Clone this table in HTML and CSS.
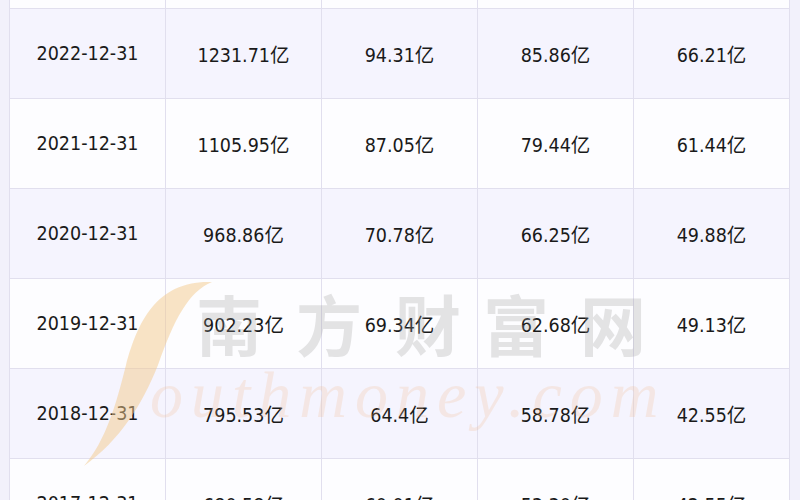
FILE: index.html
```html
<!DOCTYPE html>
<html lang="zh-CN">
<head>
<meta charset="utf-8">
<title>财务数据</title>
<link rel="stylesheet" href="styles.css">
</head>
<body>
<div class="page">
  <table class="data">
    <tbody>
      <tr class="stub odd"><td></td><td></td><td></td><td></td><td></td></tr>
      <tr class="even"><td>2022-12-31</td><td>1231.71亿</td><td>94.31亿</td><td>85.86亿</td><td>66.21亿</td></tr>
      <tr class="odd"><td>2021-12-31</td><td>1105.95亿</td><td>87.05亿</td><td>79.44亿</td><td>61.44亿</td></tr>
      <tr class="even"><td>2020-12-31</td><td>968.86亿</td><td>70.78亿</td><td>66.25亿</td><td>49.88亿</td></tr>
      <tr class="odd"><td>2019-12-31</td><td>902.23亿</td><td>69.34亿</td><td>62.68亿</td><td>49.13亿</td></tr>
      <tr class="even"><td>2018-12-31</td><td>795.53亿</td><td>64.4亿</td><td>58.78亿</td><td>42.55亿</td></tr>
      <tr class="odd"><td>2017-12-31</td><td>680.58亿</td><td>60.01亿</td><td>53.30亿</td><td>42.55亿</td></tr>
    </tbody>
  </table>
  <svg class="watermark" width="800" height="500" viewBox="0 0 800 500" aria-hidden="true">
    <path class="wm-s" d="M212 282 C158 280 138 320 126 365 C116 405 106 440 84 466 C120 440 142 405 158 365 C174 320 188 292 212 282 Z"/>
    <text class="wm-cn" x="196 296 395 483 580" y="351">南方财富网</text>
    <text class="wm-en" x="150" y="417">outhmoney.com</text>
  </svg>
</div>
</body>
</html>
```

FILE: styles.css
```css
html, body {
  margin: 0;
  padding: 0;
  background: #f2f1fb;
}

.page {
  position: relative;
  width: 800px;
  height: 500px;
  overflow: hidden;
  padding: 0 10px 0 9px;
  box-sizing: border-box;
}

.data {
  width: 781px;
  table-layout: fixed;
  border-collapse: collapse;
  font-family: "DejaVu Sans Condensed", "DejaVu Sans", "Noto Sans CJK SC", sans-serif;
  font-size: 19.5px;
  color: #1a1a1a;
}

.data td {
  height: 89px;
  padding: 0;
  text-align: center;
  vertical-align: middle;
  border: 1px solid #e1dfee;
  white-space: nowrap;
}

.data tr.stub td {
  height: 8px;
  border-top: none;
}

.data tr.even td {
  background: #f5f4fe;
}

.data tr.odd td {
  background: #fdfdff;
}

.watermark {
  position: absolute;
  left: 0;
  top: 0;
  pointer-events: none;
}

.wm-s {
  fill: #f3c98c;
  opacity: 0.5;
}

.wm-cn {
  font-family: "Noto Sans CJK SC", sans-serif;
  font-weight: 700;
  font-size: 66px;
  fill: #9a9a9a;
  opacity: 0.26;
}

.wm-en {
  font-family: "Liberation Serif", serif;
  font-style: italic;
  font-size: 66px;
  letter-spacing: 8px;
  fill: #f2b98a;
  opacity: 0.22;
}
```
